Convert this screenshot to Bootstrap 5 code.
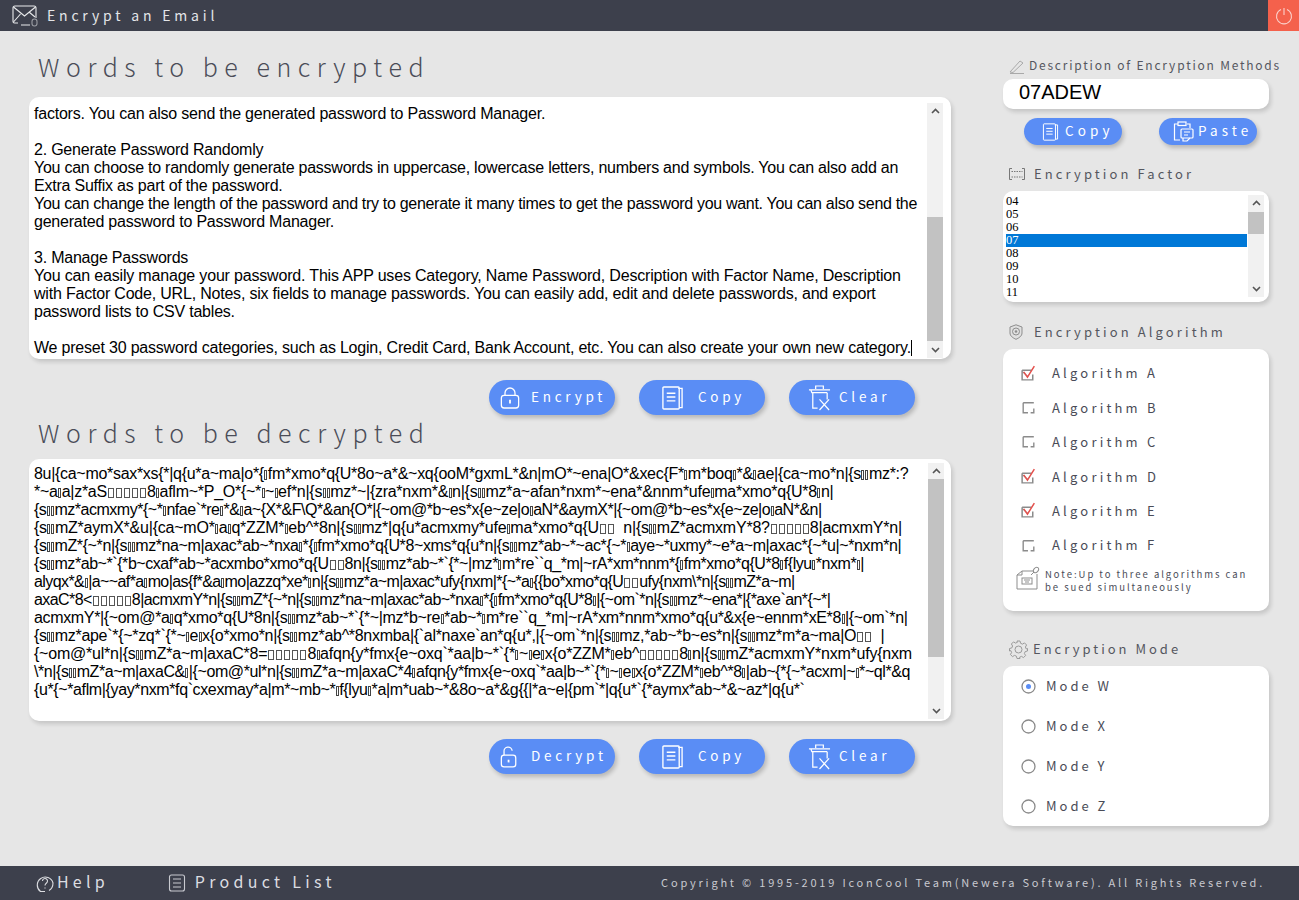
<!doctype html>
<html lang="en">
<head>
<meta charset="utf-8">
<title>Encrypt an Email</title>
<link href="https://cdn.jsdelivr.net/npm/bootstrap@5.3.0/dist/css/bootstrap.min.css" rel="stylesheet">
<style>
html,body{height:900px;overflow:hidden}
body{background:#e6e6e6;font-family:"Noto Sans CJK SC","Noto Sans",sans-serif;color:#4a4c57}
svg{flex:none;display:block}
.top-bar{height:31px;background:#3d404c;color:#e4e5e8}
.top-icon{margin:0 8px 0 12px}
.top-title{font-size:14px;letter-spacing:3.8px;line-height:1;padding-bottom:2px}
.power-box{width:31px;height:31px;background:#f4614c}
.main-area{height:835px}
.left-col{width:922px;margin-left:29px}
.right-col{width:266px;margin-left:52px}
.big-head{height:40px;line-height:36px;font-size:25px;font-weight:300;letter-spacing:6.55px;margin:0 0 0 9px;color:#4b4d58;white-space:nowrap}
.head-a{margin-top:17px}
.head-b{margin-top:-1px}
.sheet{background:#fff;height:262px;border-radius:10px;box-shadow:2px 3px 4px rgba(0,0,0,.14)}
.sheet-a{margin-top:9px}
.sheet-b{margin-top:5px}
.text-flow{flex:1;min-width:0;overflow:hidden;font-family:"Liberation Sans",Arial,sans-serif;font-size:16px;line-height:18px;color:#000;white-space:nowrap;padding-left:5px;letter-spacing:-.22px}
.sheet-a .text-flow{padding-top:8px}
.sheet-b .text-flow{padding-top:6px}
.pa-choose{letter-spacing:-.245px}
.pa-change{letter-spacing:-.305px}
.pa-easily{letter-spacing:-.18px}
.pa-with{letter-spacing:-.2px}
.pa-last{letter-spacing:-.205px}
.cl1{letter-spacing:-.305px}
.cl2{letter-spacing:-.27px}
.cl3{letter-spacing:-.48px}
.cl4{letter-spacing:-.22px}
.cl5{letter-spacing:-.4px}
.cl6{letter-spacing:-.44px}
.cl7{letter-spacing:-.59px}
.cl8{letter-spacing:-.57px}
.cl9{letter-spacing:-.35px}
.cl10{letter-spacing:-.3px}
.cl11{letter-spacing:-.22px}
.cl12{letter-spacing:-.41px}
.cl13{letter-spacing:-.38px}
.blank-line{height:18px}
.caret-mark{display:inline-block;width:1px;height:16px;background:#000;vertical-align:-3px}
.cipher i{display:inline-block;width:3px;height:10px;border:1px solid #444;margin:0 .5px;vertical-align:-1px}
.cipher b{display:inline-block;width:6px;height:10px;border:1px solid #555;margin:0 1px;vertical-align:-1px}
.fake-scroll{width:16px;background:#f1f1f1;display:flex;flex-direction:column}
.sheet-a .fake-scroll{margin:6px 8px 1px 0}
.sheet-b .fake-scroll{margin:4px 7px 2px 0}
.arrow-cell{height:16px;flex:none;display:flex;align-items:center;justify-content:center}
.gap-cell{flex:none}
.thumb-cell{background:#c2c2c2;flex:none}
.pill{background:#5a8df5;color:#fff;border:0;border-radius:18px;box-shadow:2px 3px 4px rgba(0,0,0,.2);padding:0;display:flex;align-items:center;justify-content:flex-start;white-space:nowrap}
.pill:hover{background:#5a8df5;color:#fff}
.pill span{padding-bottom:2px}
.pill-big{width:126px;height:35px;font-size:13.5px;letter-spacing:3.75px}
.pill-small{width:98px;height:27px;font-size:13.5px;letter-spacing:4.1px}
.pos-enc{padding-left:11px;gap:11px}
.pos-dec{padding-left:11px;gap:13px}
.pos-cop{padding-left:22px;gap:14px}
.pos-clr{padding-left:19px;gap:8px}
.pos-sc{padding-left:18px;gap:6px}
.pos-sp{padding-left:14px;gap:4px}
.act-row{gap:24px;padding-right:36px}
.act-a{margin-top:21px}
.act-b{margin-top:18px}
.side-label{height:20px;display:flex;align-items:center;white-space:nowrap;color:#55575f;margin-left:6px}
.side-label span{padding-bottom:1px}
.lab-desc{font-size:12px;letter-spacing:1.78px;margin-top:25px;gap:4px}
.lab-desc span{padding-bottom:3px}
.lab-fact{font-size:13px;letter-spacing:3.1px;margin-top:19px;gap:9px}
.lab-algo{font-size:13px;letter-spacing:3.12px;margin-top:20px;gap:11px}
.lab-mode{font-size:13px;letter-spacing:3px;margin-top:28px;gap:5px}
.white-box{background:#fff;border-radius:10px;box-shadow:2px 3px 4px rgba(0,0,0,.14)}
.code-box{height:30px;margin-top:3px;font-family:"Liberation Sans",Arial,sans-serif;font-size:20px;line-height:27px;color:#000;padding-left:16px}
.code-acts{margin-top:9px;padding-left:21px;gap:37px}
.factor-box{height:111px;margin-top:7px;padding:4px 5px 5px 3px}
.factor-list{flex:1;font-family:"Liberation Serif",serif;font-size:12.5px;line-height:13px;color:#000}
.factor-list div{height:13px}
.factor-list .sel-row{background:#0078d7;color:#fff}
.factor-box .fake-scroll{width:16px;margin:0 0 0 1px}
.algo-box{height:262px;margin-top:7px;padding-top:7px}
.algo-row{height:34.4px;display:flex;align-items:center;font-size:13px;letter-spacing:3.2px;color:#4a4c57;padding-left:17px;gap:15px;white-space:nowrap}
.note-row{margin-top:4px;padding-left:13px;gap:5px;font-size:9.5px;letter-spacing:1.96px;line-height:13px;color:#4a4c57;white-space:nowrap}
.note-row div{padding-top:2px}
.mode-box{height:160px;margin-top:7px}
.mode-row{height:40px;display:flex;align-items:center;font-size:13px;letter-spacing:3px;color:#4a4c57;padding-left:18px;gap:10px}
.bottom-bar{height:34px;background:#3d404c;color:#dcdde1}
.foot-help{font-size:16px;letter-spacing:4.2px;margin-left:36px;gap:3px;color:#dcdde1}
.foot-list{font-size:16px;letter-spacing:4.3px;margin-left:59px;gap:9px;color:#dcdde1}
.bottom-bar span{padding-bottom:5px}
.foot-copy{font-size:11px;letter-spacing:2.8px;margin-left:auto;margin-right:34px;color:#c9cad0;white-space:nowrap;padding-bottom:2px}
</style>
</head>
<body class="d-flex flex-column">

<svg width="0" height="0" class="position-absolute">
  <defs>
    <symbol id="ic-copy" viewBox="0 0 24 26"><g fill="none" stroke="#fff" stroke-width="1.4"><path d="M18 3h4v20h-3"/><rect x="2" y="1.5" width="17" height="23" rx="1"/><path d="M6 8h9M6 12h9M6 16h9"/></g></symbol>
    <symbol id="ic-trash" viewBox="0 0 24 28"><g fill="none" stroke="#fff" stroke-width="1.3"><path d="M1 6h22M8 5V2h8v3M3 6l1 3h16M5 9v16h5"/><path d="M20 9v7M12 27l10-11M12 16l10 11"/></g></symbol>
    <symbol id="ic-up" viewBox="0 0 9 6"><path d="M1 5l3.5-3.5L8 5" fill="none" stroke="#555" stroke-width="1.6"/></symbol>
    <symbol id="ic-down" viewBox="0 0 9 6"><path d="M1 1l3.5 3.5L8 1" fill="none" stroke="#555" stroke-width="1.6"/></symbol>
    <symbol id="ic-on" viewBox="0 0 16 16"><g fill="none"><path d="M2 5h9M2 5v9h10V9" stroke="#8b8b8b" stroke-width="1.4"/><path d="M2.500 6.500l5 4.500" stroke="#8b8b8b" stroke-width="1"/><path d="M3.500 6.500l3.500 5L13.500 1" stroke="#e4504c" stroke-width="1.400"/></g></symbol>
    <symbol id="ic-off" viewBox="0 0 16 16"><path d="M3 3.500h10M3 3.500v9.500h4.500M10 13h3V9" fill="none" stroke="#8b8b8b" stroke-width="1.300"/></symbol>
  </defs>
</svg>

<header class="top-bar d-flex align-items-center">
  <svg class="top-icon" width="27" height="22" viewBox="0 0 27 22"><g fill="none" stroke="#e9eaec" stroke-width="1.100"><path d="M6 18H2.500Q1 18 1 16.500V3Q1 1 3 1H22Q24 1 24 3V13"/><path d="M1.500 2L12.500 11 23.500 2M1.500 17L8.500 9M23 12L17 7M9 20H18"/><rect x="20" y="14" width="5" height="7" rx="2.400" stroke="#9a9ca3"/></g></svg>
  <span class="top-title">Encrypt an Email</span>
  <div class="power-box ms-auto d-flex align-items-center justify-content-center">
    <svg width="18" height="18" viewBox="0 0 18 18"><g fill="none" stroke="#fbd2cc" stroke-width="1.100"><path d="M6 2.500A7.500 7.500 0 1 0 12 2.500"/><path d="M9 1v7"/></g></svg>
  </div>
</header>

<main class="main-area d-flex">
  <div class="left-col">
    <h1 class="big-head head-a">Words to be encrypted</h1>
    <section class="sheet sheet-a d-flex">
      <div class="text-flow">
        <div>factors. You can also send the generated password to Password Manager.</div>
        <div class="blank-line"></div>
        <div>2. Generate Password Randomly</div>
        <div class="pa-choose">You can choose to randomly generate passwords in uppercase, lowercase letters, numbers and symbols. You can also add an</div>
        <div>Extra Suffix as part of the password.</div>
        <div class="pa-change">You can change the length of the password and try to generate it many times to get the password you want. You can also send the</div>
        <div>generated password to Password Manager.</div>
        <div class="blank-line"></div>
        <div>3. Manage Passwords</div>
        <div class="pa-easily">You can easily manage your password. This APP uses Category, Name Password, Description with Factor Name, Description</div>
        <div class="pa-with">with Factor Code, URL, Notes, six fields to manage passwords. You can easily add, edit and delete passwords, and export</div>
        <div>password lists to CSV tables.</div>
        <div class="blank-line"></div>
        <div class="pa-last">We preset 30 password categories, such as Login, Credit Card, Bank Account, etc. You can also create your own new category.<span class="caret-mark"></span></div>
      </div>
      <div class="fake-scroll">
        <div class="arrow-cell"><svg width="9" height="6"><use href="#ic-up"/></svg></div>
        <div class="gap-cell" style="height:98px"></div>
        <div class="thumb-cell" style="height:124px"></div>
        <div class="arrow-cell mt-auto"><svg width="9" height="6"><use href="#ic-down"/></svg></div>
      </div>
    </section>
    <div class="act-row act-a d-flex justify-content-end">
      <button class="btn pill pill-big pos-enc" type="button">
        <svg width="20" height="24" viewBox="0 0 22 24"><g fill="none" stroke="#fff" stroke-width="1.400"><rect x="1.500" y="9" width="19" height="14" rx="3"/><path d="M5.500 9V6.500a5.500 5.500 0 0 1 11 0V9"/><path d="M11 14v4" stroke-width="2"/></g></svg>
        <span>Encrypt</span>
      </button>
      <button class="btn pill pill-big pos-cop" type="button">
        <svg width="23" height="26"><use href="#ic-copy"/></svg>
        <span>Copy</span>
      </button>
      <button class="btn pill pill-big pos-clr" type="button">
        <svg width="23" height="27"><use href="#ic-trash"/></svg>
        <span>Clear</span>
      </button>
    </div>

    <h2 class="big-head head-b">Words to be decrypted</h2>
    <section class="sheet sheet-b d-flex">
      <div class="text-flow cipher">
        <div class="cl1">8u|{ca~mo*sax*xs{*|q{u*a~ma|o*{<i></i>fm*xmo*q{U*8o~a*&amp;~xq{ooM*gxmL*&amp;n|mO*~ena|O*&amp;xec{F*<i></i>m*boq<i></i>*&amp;<i></i>ae|{ca~mo*n|{s<i></i><i></i>mz*:?</div>
        <div class="cl2">*~a<i></i>a|z*aS<b></b><b></b><b></b><b></b><b></b>8<i></i>aflm~*P_O*{~*<i></i>~<i></i>ef*n|{s<i></i><i></i>mz*~|{zra*nxm*&amp;<i></i>n|{s<i></i><i></i>mz*a~afan*nxm*~ena*&amp;nnm*ufe<i></i>ma*xmo*q{U*8<i></i>n|</div>
        <div class="cl3">{s<i></i><i></i>mz*acmxmy*{~*<i></i>nfae`*re<i></i>*&amp;<i></i>a~{X*&amp;F\Q*&amp;an{O*|{~om@*b~es*x{e~ze|o<i></i>aN*&amp;aymX*|{~om@*b~es*x{e~ze|o<i></i>aN*&amp;n|</div>
        <div class="cl4">{s<i></i><i></i>mZ*aymX*&amp;u|{ca~mO*<i></i>a<i></i>q*ZZM*<i></i>eb^*8n|{s<i></i><i></i>mz*|q{u*acmxmy*ufe<i></i>ma*xmo*q{U<b></b><b></b>&nbsp;&nbsp;n|{s<i></i><i></i>mZ*acmxmY*8?<b></b><b></b><b></b><b></b><b></b>8|acmxmY*n|</div>
        <div class="cl5">{s<i></i><i></i>mZ*{~*n|{s<i></i><i></i>mz*na~m|axac*ab~*nxa<i></i>*{<i></i>fm*xmo*q{U*8~xms*q{u*n|{s<i></i><i></i>mz*ab~*~ac*{~*<i></i>aye~*uxmy*~e*a~m|axac*{~*u|~*nxm*n|</div>
        <div class="cl6">{s<i></i><i></i>mz*ab~*`{*b~cxaf*ab~*acxmbo*xmo*q{U<b></b><b></b>8n|{s<i></i><i></i>mz*ab~*`{*~|mz*<i></i>m*re``q_*m|~rA*xm*nnm*{<i></i>fm*xmo*q{U*8<i></i>f{lyu<i></i>*nxm*<i></i>|</div>
        <div class="cl7">alyqx*&amp;<i></i>|a~~af*a<i></i>mo|as{f*&amp;a<i></i>mo|azzq*xe*<i></i>n|{s<i></i><i></i>mz*a~m|axac*ufy{nxm|*{~*a<i></i>{{bo*xmo*q{U<b></b><b></b>ufy{nxm\*n|{s<i></i><i></i>mZ*a~m|</div>
        <div class="cl8">axaC*8&lt;<b></b><b></b><b></b><b></b><b></b>8|acmxmY*n|{s<i></i><i></i>mZ*{~*n|{s<i></i><i></i>mz*na~m|axac*ab~*nxa<i></i>*{<i></i>fm*xmo*q{U*8<i></i>|{~om`*n|{s<i></i><i></i>mz*~ena*|{*axe`an*{~*|</div>
        <div class="cl9">acmxmY*|{~om@*a<i></i>q*xmo*q{U*8n|{s<i></i><i></i>mz*ab~*`{*~|mz*b~re<i></i>*ab~*<i></i>m*re``q_*m|~rA*xm*nnm*xmo*q{u*&amp;x{e~ennm*xE*8<i></i>|{~om`*n|</div>
        <div class="cl10">{s<i></i><i></i>mz*ape`*{~*zq*`{*~<i></i>e<i></i>x{o*xmo*n|{s<i></i><i></i>mz*ab^*8nxmba|{`al*naxe`an*q{u*,|{~om`*n|{s<i></i><i></i>mz,*ab~*b~es*n|{s<i></i><i></i>mz*m*a~ma|O<b></b><b></b>&nbsp;&nbsp;|</div>
        <div class="cl11">{~om@*ul*n|{s<i></i><i></i>mZ*a~m|axaC*8=<b></b><b></b><b></b><b></b><b></b>8<i></i>afqn{y*fmx{e~oxq`*aa|b~*`{*<i></i>~<i></i>e<i></i>x{o*ZZM*<i></i>eb^<b></b><b></b><b></b><b></b><b></b>8<i></i>n|{s<i></i><i></i>mZ*acmxmY*nxm*ufy{nxm</div>
        <div class="cl12">\*n|{s<i></i><i></i>mZ*a~m|axaC&amp;<i></i>|{~om@*ul*n|{s<i></i><i></i>mZ*a~m|axaC*4<i></i>afqn{y*fmx{e~oxq`*aa|b~*`{*<i></i>~<i></i>e<i></i>x{o*ZZM*<i></i>eb^*8<i></i>|ab~{*{~*acxm|~<i></i>*~ql*&amp;q</div>
        <div class="cl13">{u*{~*aflm|{yay*nxm*fq`cxexmay*a|m*~mb~*<i></i>f{lyu<i></i>*a|m*uab~*&amp;8o~a*&amp;g{{|*a~e|{pm`*|q{u*`{*aymx*ab~*&amp;~az*|q{u*`</div>
      </div>
      <div class="fake-scroll">
        <div class="arrow-cell"><svg width="9" height="6"><use href="#ic-up"/></svg></div>
        <div class="thumb-cell" style="height:178px"></div>
        <div class="arrow-cell mt-auto"><svg width="9" height="6"><use href="#ic-down"/></svg></div>
      </div>
    </section>
    <div class="act-row act-b d-flex justify-content-end">
      <button class="btn pill pill-big pos-dec" type="button">
        <svg width="18" height="24" viewBox="0 0 20 24"><g fill="none" stroke="#fff" stroke-width="1.400"><rect x="1.500" y="10" width="16" height="13" rx="3"/><path d="M4.500 10V6a4.500 4.500 0 0 1 9 -1"/><path d="M9.500 15v3" stroke-width="2"/></g></svg>
        <span>Decrypt</span>
      </button>
      <button class="btn pill pill-big pos-cop" type="button">
        <svg width="23" height="26"><use href="#ic-copy"/></svg>
        <span>Copy</span>
      </button>
      <button class="btn pill pill-big pos-clr" type="button">
        <svg width="23" height="27"><use href="#ic-trash"/></svg>
        <span>Clear</span>
      </button>
    </div>
  </div>

  <aside class="right-col">
    <div class="side-label lab-desc">
      <svg width="16" height="15" viewBox="0 0 16 15"><g fill="none" stroke="#a9a9a9" stroke-width="1"><path d="M1 13L11 2l3 2L4 13.500z"/><path d="M1 14.500H15"/></g></svg>
      <span>Description of Encryption Methods</span>
    </div>
    <div class="white-box code-box">07ADEW</div>
    <div class="code-acts d-flex">
      <button class="btn pill pill-small pos-sc" type="button">
        <svg width="17" height="20"><use href="#ic-copy"/></svg>
        <span>Copy</span>
      </button>
      <button class="btn pill pill-small pos-sp" type="button">
        <svg width="21" height="21" viewBox="0 0 21 21"><g fill="none" stroke="#fff" stroke-width="1.200"><path d="M5 3H1.500V19H7M14 3h3v4"/><rect x="5" y="1" width="8" height="3.500"/><rect x="8" y="8" width="12" height="9" rx="1"/><path d="M11 11h6M11 14h4M10 17v3h4l3-3"/></g></svg>
        <span>Paste</span>
      </button>
    </div>

    <div class="side-label lab-fact">
      <svg width="16" height="12" viewBox="0 0 16 12"><g fill="none" stroke="#777" stroke-width="1"><path d="M3 .5H.5v11H3M13 .5h2.500v11H13"/><path d="M2.500 3.500h11M2.500 9h11" stroke-dasharray="1.500 1"/></g></svg>
      <span>Encryption Factor</span>
    </div>
    <div class="white-box factor-box d-flex">
      <div class="factor-list">
        <div>04</div><div>05</div><div>06</div><div class="sel-row">07</div><div>08</div><div>09</div><div>10</div><div>11</div>
      </div>
      <div class="fake-scroll">
        <div class="arrow-cell"><svg width="9" height="6"><use href="#ic-up"/></svg></div>
        <div class="gap-cell" style="height:1px"></div>
        <div class="thumb-cell" style="height:22px"></div>
        <div class="arrow-cell mt-auto"><svg width="9" height="6"><use href="#ic-down"/></svg></div>
      </div>
    </div>

    <div class="side-label lab-algo">
      <svg width="14" height="16" viewBox="0 0 14 16"><path d="M7 .8L13 3v6c0 3-3 5-6 6.300C4 14 1 12 1 9V3z" fill="#e0e0e0" stroke="#8d8d8d"/><circle cx="7" cy="7.500" r="3.500" fill="none" stroke="#8d8d8d"/><circle cx="7" cy="7.500" r="1.300" fill="#8d8d8d"/></svg>
      <span>Encryption Algorithm</span>
    </div>
    <div class="white-box algo-box">
      <div class="algo-row"><svg width="17" height="17"><use href="#ic-on"/></svg><span>Algorithm A</span></div>
      <div class="algo-row"><svg width="17" height="17"><use href="#ic-off"/></svg><span>Algorithm B</span></div>
      <div class="algo-row"><svg width="17" height="17"><use href="#ic-off"/></svg><span>Algorithm C</span></div>
      <div class="algo-row"><svg width="17" height="17"><use href="#ic-on"/></svg><span>Algorithm D</span></div>
      <div class="algo-row"><svg width="17" height="17"><use href="#ic-on"/></svg><span>Algorithm E</span></div>
      <div class="algo-row"><svg width="17" height="17"><use href="#ic-off"/></svg><span>Algorithm F</span></div>
      <div class="note-row d-flex">
        <svg width="24" height="24" viewBox="0 0 24 24"><g fill="none" stroke="#8d8d8d" stroke-width="1"><path d="M17 5H6L1 9v14h20V8"/><path d="M1 9h5V5"/><ellipse cx="20" cy="4" rx="2.200" ry="3" transform="rotate(40 20 4)"/><path d="M18 6l-3 3"/><rect x="6" y="12" width="10" height="6"/><path d="M8 14h6M9 16h4"/></g></svg>
        <div>Note:Up to three algorithms can<br>be sued simultaneously</div>
      </div>
    </div>

    <div class="side-label lab-mode">
      <svg width="19" height="19" viewBox="0 0 19 19"><g fill="none" stroke="#9a9a9a" stroke-width="1"><circle cx="9.500" cy="9.500" r="3.500"/><path d="M8 1h3l.6 2.300 1.900.8 2-1.200 2.100 2.100-1.200 2 .8 1.900L18.500 8.500v2.500l-2.300.6-.8 1.900 1.200 2-2.100 2.100-2-1.200-1.900.8L11 18.500H8l-.6-2.300-1.900-.8-2 1.200-2.100-2.100 1.200-2-.8-1.900L.5 11V8.500l2.300-.6.8-1.900-1.200-2 2.100-2.100 2 1.200 1.900-.8z"/></g></svg>
      <span>Encryption Mode</span>
    </div>
    <div class="white-box mode-box">
      <div class="mode-row"><svg width="15" height="15" viewBox="0 0 15 15"><circle cx="7.500" cy="7.500" r="6.500" fill="#fff" stroke="#8a8a8a" stroke-width="1.300"/><circle cx="7.500" cy="7.500" r="2.500" fill="#5a8df5"/></svg><span>Mode W</span></div>
      <div class="mode-row"><svg width="15" height="15" viewBox="0 0 15 15"><circle cx="7.500" cy="7.500" r="6.500" fill="#fff" stroke="#8a8a8a" stroke-width="1.300"/></svg><span>Mode X</span></div>
      <div class="mode-row"><svg width="15" height="15" viewBox="0 0 15 15"><circle cx="7.500" cy="7.500" r="6.500" fill="#fff" stroke="#8a8a8a" stroke-width="1.300"/></svg><span>Mode Y</span></div>
      <div class="mode-row"><svg width="15" height="15" viewBox="0 0 15 15"><circle cx="7.500" cy="7.500" r="6.500" fill="#fff" stroke="#8a8a8a" stroke-width="1.300"/></svg><span>Mode Z</span></div>
    </div>
  </aside>
</main>

<footer class="bottom-bar d-flex align-items-center">
  <div class="foot-help d-flex align-items-center">
    <svg width="18" height="18" viewBox="0 0 18 18"><g fill="none" stroke="#dcdde1" stroke-width="1.100"><path d="M9 17.500H4.500A8 8 0 1 1 17 9c0 3-1.500 6-4 7.500"/><path d="M6.500 7a2.500 2.500 0 1 1 4 2c-1 .8-1.500 1.200-1.500 2.500M9 13.500v1"/></g></svg>
    <span>Help</span>
  </div>
  <div class="foot-list d-flex align-items-center">
    <svg width="18" height="18" viewBox="0 0 18 18"><g fill="none" stroke="#c9cad0" stroke-width="1.100"><rect x="1.500" y="1" width="15" height="16" rx="2"/><path d="M5 5h8M5 9h8M5 13h8"/></g></svg>
    <span>Product List</span>
  </div>
  <div class="foot-copy">Copyright © 1995-2019 IconCool Team(Newera Software). All Rights Reserved.</div>
</footer>

<script src="https://cdn.jsdelivr.net/npm/bootstrap@5.3.0/dist/js/bootstrap.bundle.min.js"></script>
</body>
</html>
